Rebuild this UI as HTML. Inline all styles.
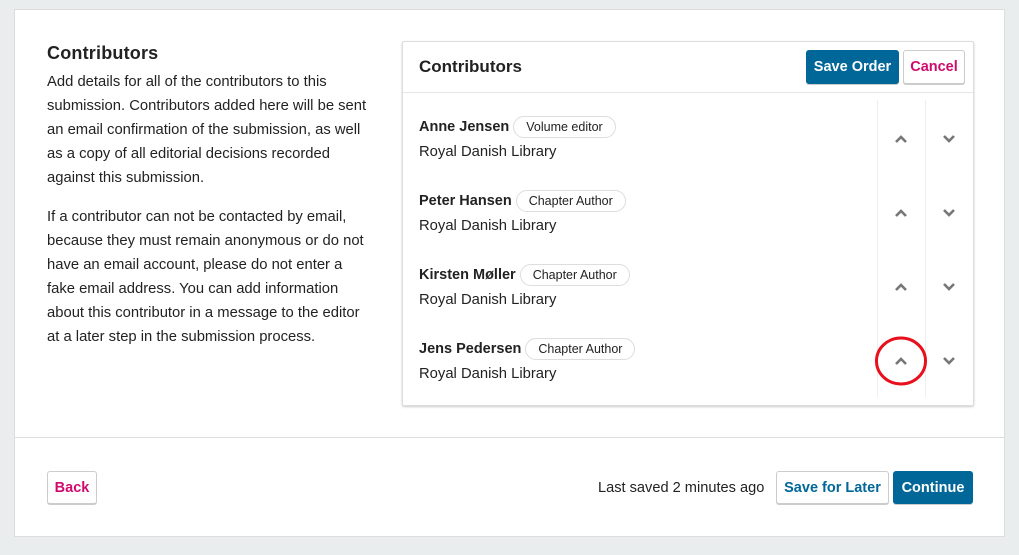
<!DOCTYPE html>
<html><head><meta charset="utf-8"><style>
*{box-sizing:border-box;margin:0;padding:0}
body{width:1019px;height:555px;background:#eaedee;font-family:"Liberation Sans",sans-serif;color:#222;position:relative;overflow:hidden}
.panel{position:absolute;left:14px;top:9px;width:991px;height:528px;background:#fff;border:1px solid #ddd}
.abs{position:absolute}
h2{position:absolute;left:47px;top:43px;font-size:18px;font-weight:bold;letter-spacing:0.2px}
.desc{position:absolute;left:47px;width:325px;font-size:14.8px;line-height:24px}
.card{position:absolute;left:402px;top:41px;width:572px;height:365px;border:1px solid #ddd;border-radius:2px;box-shadow:0 1px 2px rgba(0,0,0,.2);background:#fff}
.btn{position:absolute;border:1px solid #ccc;border-radius:3px;font-weight:bold;font-size:14.5px;display:flex;align-items:center;justify-content:center;box-shadow:0 1px 0 #ccc;background:#fff}
.pri{background:#006798;color:#fff;border-color:#006798}
.name{position:absolute;left:419px;font-weight:bold;font-size:14.5px}
.tag{display:inline-block;margin-left:4px;border:1px solid #ddd;border-radius:14px;padding:3px 12px;font-weight:normal;font-size:12.5px;vertical-align:middle}
.aff{position:absolute;left:419px;font-size:14.8px}
.vl{position:absolute;top:100px;height:297px;width:1px;background:#eee}
</style></head><body>
<div class="panel"></div>
<h2>Contributors</h2>
<div class="desc" style="top:70px">Add details for all of the contributors to this submission. Contributors added here will be sent an email confirmation of the submission, as well as a copy of all editorial decisions recorded against this submission.</div>
<div class="desc" style="top:205px">If a contributor can not be contacted by email, because they must remain anonymous or do not have an email account, please do not enter a fake email address. You can add information about this contributor in a message to the editor at a later step in the submission process.</div>
<div class="card"></div>
<div class="abs" style="left:403px;top:92px;width:570px;height:1px;background:#e5e5e5"></div>
<div class="abs" style="left:419px;top:57px;font-size:17px;font-weight:bold">Contributors</div>
<div class="btn pri" style="left:806px;top:50px;width:93px;height:34px">Save Order</div>
<div class="btn" style="left:903px;top:50px;width:62px;height:34px;color:#d00a6c">Cancel</div>
<div class="vl" style="left:877px"></div><div class="vl" style="left:925px"></div>

<div class="name" style="top:116px">Anne Jensen<span class="tag">Volume editor</span></div>
<div class="aff" style="top:144px">Royal Danish Library</div>
<div class="name" style="top:190px">Peter Hansen<span class="tag">Chapter Author</span></div>
<div class="aff" style="top:218px">Royal Danish Library</div>
<div class="name" style="top:264px">Kirsten Møller<span class="tag">Chapter Author</span></div>
<div class="aff" style="top:292px">Royal Danish Library</div>
<div class="name" style="top:338px">Jens Pedersen<span class="tag">Chapter Author</span></div>
<div class="aff" style="top:366px">Royal Danish Library</div>

<svg class="abs" style="left:0;top:0" width="1019" height="555">
<g fill="none" stroke="#777" stroke-width="2.6">
<path d="M896 142 L901 137 L906 142"/><path d="M944 136 L949 141 L954 136"/>
<path d="M896 216 L901 211 L906 216"/><path d="M944 210 L949 215 L954 210"/>
<path d="M896 290 L901 285 L906 290"/><path d="M944 284 L949 289 L954 284"/>
<path d="M896 364 L901 359 L906 364"/><path d="M944 358 L949 363 L954 358"/>
</g>
<ellipse cx="901" cy="361" rx="24.5" ry="23" fill="none" stroke="#e8101c" stroke-width="3"/>
</svg>

<div class="abs" style="left:15px;top:437px;width:989px;height:1px;background:#ddd"></div>
<div class="btn" style="left:47px;top:471px;width:50px;height:33px;color:#d00a6c">Back</div>
<div class="abs" style="left:598px;top:480px;font-size:14.6px">Last saved 2 minutes ago</div>
<div class="btn" style="left:776px;top:471px;width:113px;height:33px;color:#006798">Save for Later</div>
<div class="btn pri" style="left:893px;top:471px;width:80px;height:33px">Continue</div>
</body></html>
